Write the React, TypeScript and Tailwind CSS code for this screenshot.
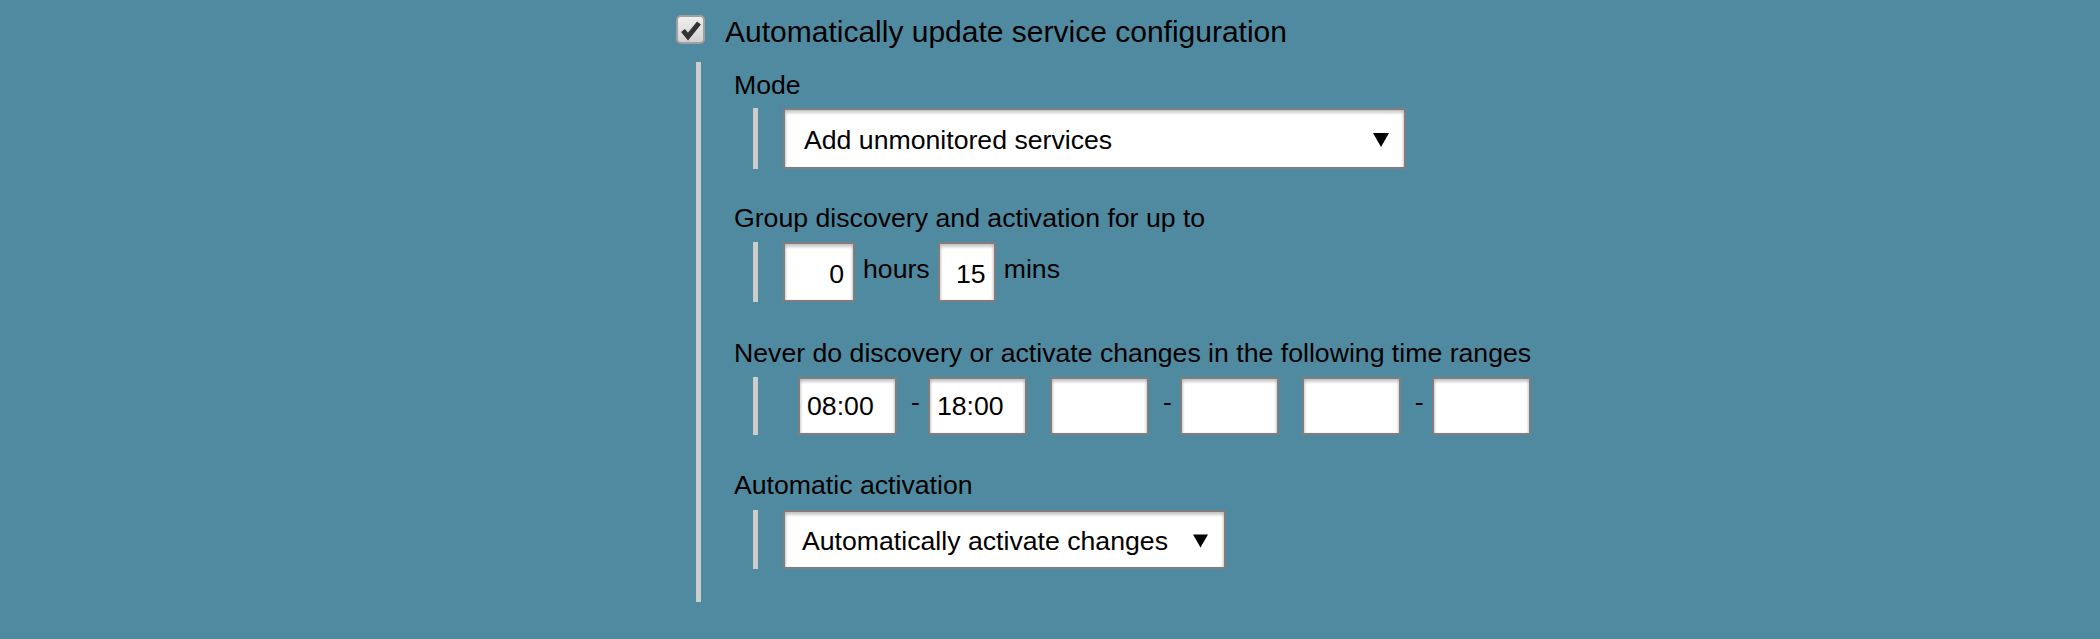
const font = { fontFamily: '"Liberation Sans", Arial, sans-serif' };

const fieldShadow =
  "border-2 border-[#7e7e7e] bg-white shadow-[inset_0_3px_3px_rgba(0,0,0,0.2),inset_2px_0_2px_rgba(0,0,0,0.07),inset_-2px_0_2px_rgba(0,0,0,0.07)]";

const Arrow = ({ w, h }: { w: number; h: number }) => (
  <svg width={w} height={h} viewBox="0 0 16 14" className="shrink-0">
    <polygon points="0,0 16,0 8,14" fill="#000" />
  </svg>
);

const SubBar = () => <div className="w-[5px] shrink-0 self-stretch bg-[#cdcdcd]" />;

const Label = ({ text, className }: { text: string; className: string }) => (
  <div className={`text-[26.67px] leading-[30px] text-black ${className}`}>{text}</div>
);

const TimeRange = ({ from, to, first }: { from: string; to: string; first?: boolean }) => (
  <div className={`flex items-start ${first ? "" : "ml-[23px]"}`}>
    <div className={`flex h-[58px] w-[99px] items-center pl-[7px] ${fieldShadow}`}>{from}</div>
    <span className="ml-[14px] mr-[8px] mt-[10px] leading-[30px]">-</span>
    <div className={`flex h-[58px] w-[99px] items-center pl-[7px] ${fieldShadow}`}>{to}</div>
  </div>
);

export default function App() {
  return (
    <div className="min-h-screen w-full bg-[#508aa0] pl-[676px] pt-[15px] text-black" style={font}>
      {/* header checkbox */}
      <div className="flex h-[29px] items-start">
        <div className="flex h-[29px] w-[29px] items-center justify-center rounded-[5px] border-2 border-[#a0a0a0] bg-gradient-to-b from-[#f0f0f0] to-[#d2d2d2]">
          <svg width="22" height="22" viewBox="0 0 22 22">
            <polyline
              points="3,11.5 8,17.5 19,4"
              fill="none"
              stroke="#333"
              strokeWidth="5"
              strokeLinejoin="miter"
            />
          </svg>
        </div>
        <div className="ml-[20px] mt-[2px] whitespace-nowrap text-[30px] leading-[29px]">
          Automatically update service configuration
        </div>
      </div>

      {/* settings block */}
      <div className="ml-[20px] mt-[18px] flex w-fit">
        <div className="w-[5px] shrink-0 bg-[#cdcdcd]" />
        <div className="pb-[33px] pl-[33px] pt-[8px] text-[26.67px]">
          <Label text="Mode" className="" />
          <div className="ml-[19px] mt-[8px] flex">
            <SubBar />
            <div className={`ml-[25px] flex h-[61px] w-[623px] items-center justify-between pl-[19px] pr-[15px] pt-[2px] ${fieldShadow}`}>
              <span className="leading-[30px]">Add unmonitored services</span>
              <Arrow w={16} h={14} />
            </div>
          </div>

          <Label text="Group discovery and activation for up to" className="mt-[34px]" />
          <div className="ml-[19px] mt-[9px] flex">
            <SubBar />
            <div className="ml-[25px] flex items-start">
              <div className={`flex h-[60px] w-[72px] items-center justify-end pr-[9px] pt-[3px] ${fieldShadow}`}>0</div>
              <span className="ml-[8px] mt-[12px] leading-[30px]">hours</span>
              <div className={`ml-[8px] flex h-[60px] w-[58px] items-center justify-end pr-[8px] pt-[3px] ${fieldShadow}`}>15</div>
              <span className="ml-[8px] mt-[12px] leading-[30px]">mins</span>
            </div>
          </div>

          <Label
            text="Never do discovery or activate changes in the following time ranges"
            className="mt-[36px] whitespace-nowrap"
          />
          <div className="ml-[19px] mt-[9px] flex">
            <SubBar />
            <div className="ml-[40px] flex">
              <TimeRange from="08:00" to="18:00" first />
              <TimeRange from="" to="" />
              <TimeRange from="" to="" />
            </div>
          </div>

          <Label text="Automatic activation" className="mt-[35px]" />
          <div className="ml-[19px] mt-[10px] flex">
            <SubBar />
            <div className={`ml-[25px] flex h-[59px] w-[443px] items-center justify-between pl-[17px] pr-[16px] pt-[2px] ${fieldShadow}`}>
              <span className="leading-[30px]">Automatically activate changes</span>
              <Arrow w={15} h={14} />
            </div>
          </div>
        </div>
      </div>
    </div>
  );
}
